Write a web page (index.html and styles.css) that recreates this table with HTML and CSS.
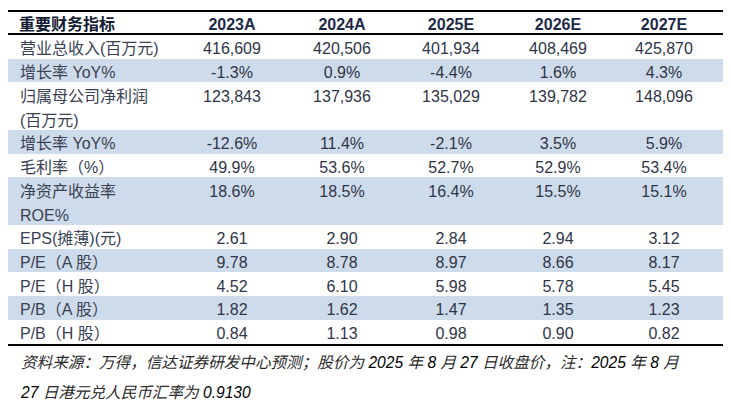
FILE: index.html
```html
<!DOCTYPE html>
<html lang="zh-CN">
<head>
<meta charset="utf-8">
<title>重要财务指标</title>
<link rel="stylesheet" href="styles.css">
</head>
<body>
<div class="page">
  <table class="fin">
    <colgroup>
      <col class="c-label">
      <col class="c-a">
      <col class="c-a">
      <col class="c-b">
      <col class="c-c">
      <col class="c-last">
    </colgroup>
    <thead>
      <tr>
        <th class="label">重要财务指标</th>
        <th>2023A</th>
        <th>2024A</th>
        <th>2025E</th>
        <th>2026E</th>
        <th class="last">2027E</th>
      </tr>
    </thead>
    <tbody>
      <tr>
        <td class="label">营业总收入(百万元)</td>
        <td>416,609</td><td>420,506</td><td>401,934</td><td>408,469</td><td class="last">425,870</td>
      </tr>
      <tr class="band">
        <td class="label">增长率 YoY%</td>
        <td>-1.3%</td><td>0.9%</td><td>-4.4%</td><td>1.6%</td><td class="last">4.3%</td>
      </tr>
      <tr>
        <td class="label"><span class="ln">归属母公司净利润</span><span class="ln ln2">(百万元)</span></td>
        <td>123,843</td><td>137,936</td><td>135,029</td><td>139,782</td><td class="last">148,096</td>
      </tr>
      <tr class="band">
        <td class="label">增长率 YoY%</td>
        <td>-12.6%</td><td>11.4%</td><td>-2.1%</td><td>3.5%</td><td class="last">5.9%</td>
      </tr>
      <tr>
        <td class="label">毛利率（%）</td>
        <td>49.9%</td><td>53.6%</td><td>52.7%</td><td>52.9%</td><td class="last">53.4%</td>
      </tr>
      <tr class="band">
        <td class="label"><span class="ln">净资产收益率</span><span class="ln ln2">ROE%</span></td>
        <td>18.6%</td><td>18.5%</td><td>16.4%</td><td>15.5%</td><td class="last">15.1%</td>
      </tr>
      <tr>
        <td class="label">EPS(摊薄)(元)</td>
        <td>2.61</td><td>2.90</td><td>2.84</td><td>2.94</td><td class="last">3.12</td>
      </tr>
      <tr class="band">
        <td class="label">P/E（A 股）</td>
        <td>9.78</td><td>8.78</td><td>8.97</td><td>8.66</td><td class="last">8.17</td>
      </tr>
      <tr>
        <td class="label">P/E（H 股）</td>
        <td>4.52</td><td>6.10</td><td>5.98</td><td>5.78</td><td class="last">5.45</td>
      </tr>
      <tr class="band">
        <td class="label">P/B（A 股）</td>
        <td>1.82</td><td>1.62</td><td>1.47</td><td>1.35</td><td class="last">1.23</td>
      </tr>
      <tr class="end">
        <td class="label">P/B（H 股）</td>
        <td>0.84</td><td>1.13</td><td>0.98</td><td>0.90</td><td class="last">0.82</td>
      </tr>
    </tbody>
  </table>
  <p class="note">资料来源：万得，信达证券研发中心预测；股价为 <span class="num">2025</span> 年 <span class="num">8</span> 月 <span class="num">27</span> 日收盘价，注：<span class="num">2025</span> 年 <span class="num">8</span> 月<br><span class="num">27</span> 日港元兑人民币汇率为 <span class="num">0.9130</span></p>
</div>
</body>
</html>
```

FILE: styles.css
```css
html, body {
  margin: 0;
  padding: 0;
  background: #ffffff;
}

body {
  font-family: "Liberation Sans", "Noto Sans CJK SC", sans-serif;
  font-size: 16px;
  color: #2e3547;
}

.page {
  padding: 10px 8px 0 8px;
  width: 715px;
}

.fin {
  width: 715px;
  table-layout: fixed;
  border-collapse: separate;
  border-spacing: 0;
}

.c-label { width: 169px; }
.c-a { width: 110px; }
.c-b { width: 108px; }
.c-c { width: 106px; }
.c-last { width: 112px; }

.fin th {
  font-weight: bold;
  color: #1d2a47;
  text-align: center;
  padding: 5px 0 0 0;
  line-height: 16px;
  height: 16px;
  border-top: 2px solid #000;
  border-bottom: 2px solid #000;
}

.fin th.label {
  text-align: left;
  padding-left: 11px;
  color: #141c33;
}

.fin td {
  text-align: center;
  padding: 4.3px 0 0 0;
  line-height: 19.4px;
  vertical-align: top;
  white-space: nowrap;
}

.fin td.label {
  text-align: left;
  padding-left: 12px;
  color: #3a4153;
}

.fin .last {
  padding-right: 6px;
}

.band td {
  background: #cedbea;
}

.ln {
  display: block;
}

.ln2 {
  margin-top: 4.5px;
}

.end td {
  border-bottom: 2px solid #000;
}

.note {
  margin: 2.5px 0 0 0;
  padding-left: 13px;
  font-size: 15.6px;
  line-height: 30px;
  font-style: italic;
  color: #2a2a2a;
  white-space: nowrap;
}

.note .num {
  color: #000;
}
```
